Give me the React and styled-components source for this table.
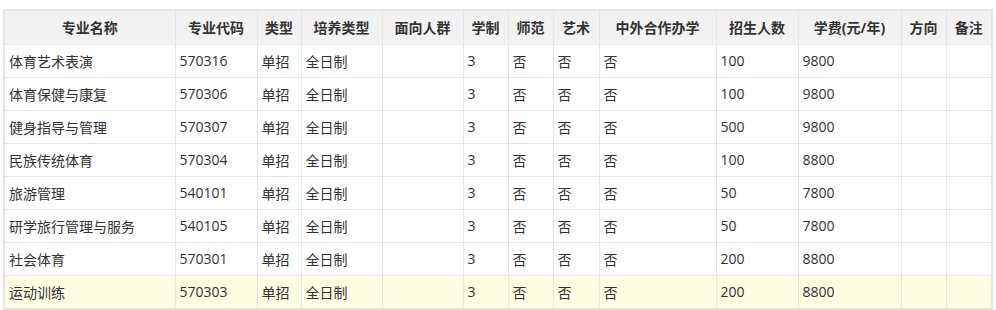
import React from 'react';
import styled, { createGlobalStyle } from 'styled-components';

const GlobalStyle = createGlobalStyle`
  html, body {
    margin: 0;
    padding: 0;
    background: #fff;
  }
  body {
    font-family: "Open Sans", "Noto Sans CJK SC", sans-serif;
    color: #333;
  }
`;

const Page = styled.div`
  padding: 9px 3px 0 3px;
`;

const Frame = styled.div`
  width: 986px;
  border: 2px solid #e6e6e6;
`;

const Table = styled.table`
  width: 100%;
  table-layout: fixed;
  border-collapse: collapse;
  border-style: hidden;
  font-size: 14px;
`;

const Row = styled.tr`
  height: 33px;
  background: ${p => (p.$active ? '#fdfde1' : '#fff')};
`;

const HeadRow = styled.tr`
  height: 33px;
  background: #f2f2f2;
`;

const Th = styled.th`
  border: 1px solid #e6e6e6;
  padding: 0 4px;
  font-weight: bold;
  text-align: center;
  white-space: nowrap;
  color: #333;
`;

const Td = styled.td`
  border: 1px solid #e6e6e6;
  padding: 0 4px;
  text-align: left;
  white-space: nowrap;
  color: #333;
`;

const columns = [
  { title: '专业名称', width: 170 },
  { title: '专业代码', width: 82 },
  { title: '类型', width: 44 },
  { title: '培养类型', width: 81 },
  { title: '面向人群', width: 81 },
  { title: '学制', width: 45 },
  { title: '师范', width: 45 },
  { title: '艺术', width: 46 },
  { title: '中外合作办学', width: 117 },
  { title: '招生人数', width: 82 },
  { title: '学费(元/年)', width: 103 },
  { title: '方向', width: 45 },
  { title: '备注', width: 45 },
];

const rows = [
  ['体育艺术表演', '570316', '100', '9800'],
  ['体育保健与康复', '570306', '100', '9800'],
  ['健身指导与管理', '570307', '500', '9800'],
  ['民族传统体育', '570304', '100', '8800'],
  ['旅游管理', '540101', '50', '7800'],
  ['研学旅行管理与服务', '540105', '50', '7800'],
  ['社会体育', '570301', '200', '8800'],
  ['运动训练', '570303', '200', '8800'],
];

export default function App() {
  return (
    <>
      <GlobalStyle />
      <Page>
        <Frame>
          <Table>
            <colgroup>
              {columns.map(c => (
                <col key={c.title} style={{ width: c.width }} />
              ))}
            </colgroup>
            <thead>
              <HeadRow>
                {columns.map(c => (
                  <Th key={c.title}>{c.title}</Th>
                ))}
              </HeadRow>
            </thead>
            <tbody>
              {rows.map((r, i) => (
                <Row key={r[1]} $active={i === rows.length - 1}>
                  <Td>{r[0]}</Td>
                  <Td>{r[1]}</Td>
                  <Td>单招</Td>
                  <Td>全日制</Td>
                  <Td></Td>
                  <Td>3</Td>
                  <Td>否</Td>
                  <Td>否</Td>
                  <Td>否</Td>
                  <Td>{r[2]}</Td>
                  <Td>{r[3]}</Td>
                  <Td></Td>
                  <Td></Td>
                </Row>
              ))}
            </tbody>
          </Table>
        </Frame>
      </Page>
    </>
  );
}
